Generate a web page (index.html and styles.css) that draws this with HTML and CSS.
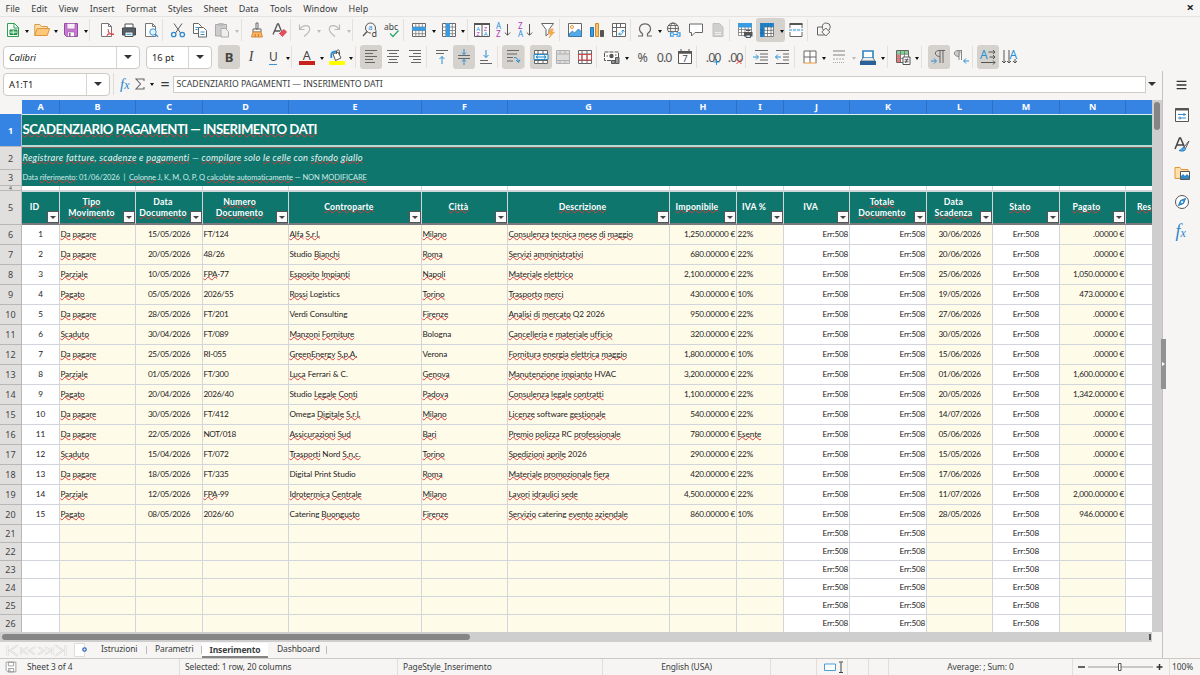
FILE: index.html
```html
<!DOCTYPE html>
<html lang="it">
<head>
<meta charset="utf-8">
<title>Scadenziario pagamenti</title>
<link rel="stylesheet" href="styles.css">
</head>
<body>
<div class="app">
<nav class="menu"><span>File</span><span>Edit</span><span>View</span><span>Insert</span><span>Format</span><span>Styles</span><span>Sheet</span><span>Data</span><span>Tools</span><span>Window</span><span>Help</span><b class="close">×</b></nav>

<div class="bar standard">
<span class="b dd"><svg viewBox="0 0 16 16"><path d="M2.500 1.500h7l4 4v9h-11z" fill="#f4fff7" stroke="#2f9e55"/><path d="M9 1.500v4.500h4.500" stroke="#2f9e55"/><path d="M5 8h7v4.500H5z" fill="#43b567" stroke="#248146"/><path d="M5 10.200h7M8.300 8v4.500" stroke="#fff" stroke-width=".7"/></svg><i></i></span>
<span class="b dd"><svg viewBox="0 0 16 16"><path d="M.8 13.500V2.500h5l1.500 2h6v2.500" fill="#ffe0ad" stroke="#d99a45"/><path d="M.8 13.500l2.400-7h12.300l-2.200 7z" fill="#ffc778" stroke="#dc963b"/></svg><i></i></span>
<span class="b dd"><svg viewBox="0 0 16 16"><path d="M1.500 1.500h13v13h-11l-2-2z" fill="#c77bd0" stroke="#974aa5"/><path d="M4 1.500h8v5.500H4z" fill="#f8effa" stroke="#974aa5" stroke-width=".6"/><path d="M4.500 10h7v4.500h-7z" fill="#fff" stroke="#974aa5" stroke-width=".6"/><path d="M6 11h1.500v3.500H6z" fill="#974aa5"/></svg><i></i></span>
<u class="w"></u>
<span class="b"><svg viewBox="0 0 16 16"><path d="M2.500 1.500h7l3 3v10h-10zM9.500 1.500v3h3" fill="#fff" stroke="#777"/><path d="M9 7c1 3 1 4-1.500 7.500M9 9c1 2.500 3 3.500 6 3.500M8 13c2-1 4-1.500 7-.8" stroke="#e0404c"/></svg></span>
<span class="b"><svg viewBox="0 0 16 16"><path d="M4 2h8v4H4z" fill="#fff" stroke="#4c5357"/><path d="M1.500 6h13v7h-13z" fill="#586067" stroke="#41484d"/><path d="M4 10h8v4.500H4z" fill="#eef8ff" stroke="#4c5357"/><path d="M5.500 12.300h5" stroke="#4398d6"/></svg></span>
<span class="b"><svg viewBox="0 0 16 16"><path d="M2.500 1.500h7l3 3v10h-10zM9.500 1.500v3h3" fill="#fff" stroke="#777"/><circle cx="10" cy="10" r="3.200" fill="#e4f4ff" stroke="#3a93d2"/><path d="M12.300 12.300l2.700 2.500" stroke="#3a93d2" stroke-width="1.500"/></svg></span>
<u></u>
<span class="b"><svg viewBox="0 0 16 16"><path d="M4 1.500l6.500 9.500M12 1.500L5.500 11" stroke="#595d60"/><circle cx="3.700" cy="12.500" r="2.200" stroke="#328bd0" stroke-width="1.300"/><circle cx="12.300" cy="12.500" r="2.200" stroke="#328bd0" stroke-width="1.300"/></svg></span>
<span class="b"><svg viewBox="0 0 16 16"><path d="M1.500 1.500h5l3 3v7h-8z" fill="#fff" stroke="#666"/><path d="M6.500 5.500h5l3 3v6.500h-8z" fill="#fff" stroke="#666"/><path d="M3.500 5.500h3M3.500 7.500h2M8.500 10h4M8.500 12.500h4" stroke="#3990cf"/></svg></span>
<span class="b dd off"><svg viewBox="0 0 16 16"><path d="M1.500 2.500h11v11.500h-11z" fill="#ccc" stroke="#aaa"/><path d="M4.500 1h5v3h-5z" fill="#bbb"/><path d="M7 6.500h4.500l3 3v5.500H7z" fill="#eee" stroke="#aaa"/></svg><i></i></span>
<u></u>
<span class="b"><svg viewBox="0 0 16 16"><path d="M7 1h2v6H7zM4 7h8v3H4z" fill="#fff" stroke="#666"/><path d="M4 10h8l1.500 5H2.500z" fill="#f9b565" stroke="#d88c35"/><path d="M6 15l.5-3M9.500 15v-3" stroke="#b36b21" stroke-width=".7"/></svg></span>
<span class="b"><svg viewBox="0 0 16 16"><path d="M2 12.500L6.500 2h1l3.200 8M3.500 9H9" stroke="#555" stroke-width="1.300"/><path d="M8 12l5-4.500 2.500 2.500-4.700 5z" fill="#e94d5c" stroke="#d54c57"/><path d="M8 12l3 3" stroke="#fff"/></svg></span>
<u class="n"></u>
<span class="b dd off"><svg viewBox="0 0 16 16"><path d="M2.500 2.500v5h5M2.800 7.200C6.500 2 12.500 3 12.700 7c.1 3-3 5.500-5.700 7.500" stroke="#b9babb" stroke-width="1.200"/></svg><i></i></span>
<span class="b dd off"><svg viewBox="0 0 16 16"><path d="M13.500 2.500v5h-5M13.200 7.200C9.500 2 3.500 3 3.300 7c-.1 3 3 5.500 5.700 7.500" stroke="#b9babb" stroke-width="1.200"/></svg><i></i></span>
<u class="w"></u>
<span class="b"><svg viewBox="0 0 16 16"><circle cx="8.500" cy="6" r="5" stroke="#555"/><path d="M5 9.500l-4 4.500" stroke="#555" stroke-width="1.300"/><text x="6.200" y="8" font-size="7.500" fill="#168ee0">a</text><path d="M9 8h5v7H9z" fill="#f6f5f4"/><text x="9.500" y="15" font-size="9" fill="#444">d</text></svg></span>
<span class="b"><svg viewBox="0 0 16 16"><text x="0" y="7.500" font-size="8.500" fill="#444">abc</text><path d="M6 11.500l3 3 5.500-6" stroke="#30a968" stroke-width="1.300"/></svg></span>
<u></u>
<span class="b dd"><svg viewBox="0 0 16 16"><path d="M1.500 1.500h13v13h-13z" fill="#fff" stroke="#666"/><path d="M4.800 1v14M8 1v14M11.300 1v14M1 5h14M1 8.500h14M1 11.700h14" stroke="#777" stroke-width=".8"/><path d="M1 5h14v3.500H1z" fill="#399be0"/></svg><i></i></span>
<span class="b dd"><svg viewBox="0 0 16 16"><path d="M1.500 1.500h13v13h-13z" fill="#fff" stroke="#666"/><path d="M4.800 1v14M8 1v14M11.300 1v14M1 5h14M1 8.500h14M1 11.700h14" stroke="#777" stroke-width=".8"/><path d="M5 1h4v14H5z" fill="#399be0"/></svg><i></i></span>
<u class="n"></u>
<span class="b"><svg viewBox="0 0 16 16"><path d="M.5 1.500h15v13H.5zM8 2v13" fill="#fff" stroke="#555"/><path d="M0 2h16" stroke="#555" stroke-width="2"/><text x="2.200" y="8.500" font-size="6" fill="#168ee0">A</text><text x="2.200" y="13.800" font-size="6" fill="#ae39b8">Z</text><text x="9.800" y="8.500" font-size="6" fill="#ae39b8">Z</text><text x="9.800" y="13.800" font-size="6" fill="#168ee0">A</text></svg></span>
<span class="b"><svg viewBox="0 0 16 16"><text x="0" y="7" font-size="8" fill="#168ee0">A</text><text x="0" y="15" font-size="8" fill="#ae39b8">Z</text><path d="M11.500 2v11M8.800 10.500l2.700 2.700 2.700-2.700" stroke="#555"/></svg></span>
<span class="b"><svg viewBox="0 0 16 16"><text x="0" y="7" font-size="8" fill="#ae39b8">Z</text><text x="0" y="15" font-size="8" fill="#168ee0">A</text><path d="M11.500 2v11M8.800 10.500l2.700 2.700 2.700-2.700" stroke="#555"/></svg></span>
<span class="b"><svg viewBox="0 0 16 16"><path d="M1.500 1.500h12L9 7.500V11l-3 3V7.500z" fill="#fff" stroke="#666"/><path d="M11 7l-3 5h3l-2 4 5.500-6h-3l2-3z" fill="#f7ad50" stroke="#e89129" stroke-width=".5"/></svg></span>
<u></u>
<span class="b"><svg viewBox="0 0 16 16"><path d="M1.500 1.500h13v13h-13z" fill="#fff" stroke="#666"/><circle cx="5" cy="5" r="1.500" stroke="#e79835"/><path d="M2 12l3.500-3 2 2 4-4 3 3v4.500H2z" fill="#55a9e4" stroke="#2576b4" stroke-width=".7"/></svg></span>
<span class="b"><svg viewBox="0 0 16 16"><path d="M1.500 5.500h3v9h-3z" fill="#3d9be1" stroke="#2277b5"/><path d="M6.500 1.500h3v13h-3z" fill="#f7c273" stroke="#d48b2b"/><path d="M11.500 8.500h3v6h-3z" fill="#555" stroke="#555"/></svg></span>
<span class="b"><svg viewBox="0 0 16 16"><path d="M1.500 1.500h13v13h-13zM1.500 5.500h13M5.500 1.500v13M9.500 2v3M2 9.500h3" fill="#fff" stroke="#666"/><path d="M8 12c3 1 4-1 4-4M10.500 9.500L12 8l1.500 1.500M9 10.500L7.500 12 9 13.500" stroke="#278dd2"/></svg></span>
<u class="n"></u>
<span class="b dd"><svg viewBox="0 0 16 16"><path d="M1 14h4.500v-2.300C.2 8.200 2.500 1.800 8 1.800s7.800 6.400 2.500 9.900V14H15" stroke="#666" stroke-width="1.200"/></svg><i></i></span>
<span class="b"><svg viewBox="0 0 16 16"><circle cx="7" cy="6.500" r="5.500" stroke="#555"/><ellipse cx="7" cy="6.500" rx="2.500" ry="5.500" stroke="#555" stroke-width=".8"/><path d="M1.500 6.500h11M2.500 3.500h9M2.500 9.500h9" stroke="#555" stroke-width=".8"/><path d="M3 10h12.500v5H3z" fill="#f6f5f4"/><path d="M8 10.800H4.500v3.400H8M10.500 10.800H14v3.400h-3.500M7 12.500h5" stroke="#369ae0" stroke-width="1.200"/></svg></span>
<span class="b"><svg viewBox="0 0 16 16"><path d="M1.500 2h13v8.500H7L3.500 14v-3.500h-2z" fill="#fff" stroke="#666"/></svg></span>
<span class="b"><svg viewBox="0 0 16 16"><path d="M3 1.500h6.500l3.500 3.500v9.500H3z" fill="#d0d0d0" stroke="#c1c1c1"/><path d="M5 10.500h6M5 12.500h6" stroke="#eee"/></svg></span>
<u></u>
<span class="b"><svg viewBox="0 0 16 16"><path d="M1.500 1.500h13v12h-13zM1.500 7.500h13M1.500 10.500h13M4.500 1.500v12M8 1.500v12M11.300 1.500v12" fill="#fff" stroke="#777" stroke-width=".8"/><path d="M1 1h14v4.500H1z" fill="#399be0"/><path d="M7 10h8.500v4.500H7z" fill="#555"/><path d="M9 8.500h4.500M9 13h4.500v2.500H9z" fill="#def" stroke="#555"/></svg></span>
<span class="b dd on"><svg viewBox="0 0 16 16"><path d="M1.500 1.500h13v13h-13zM1.500 5h13M1.500 8.300h13M1.500 11.500h13M5 1.500v13M8.500 1.500v13M12 1.500v13" fill="#fff" stroke="#666" stroke-width=".8"/><path d="M1 1h14v4H5.500v10H1z" fill="#2588ce"/><path d="M3 1v14M6 1v4M9 1v4M12 1v4M1 8h4M1 11h4" stroke="#195e92" stroke-width=".7"/></svg><i></i></span>
<span class="b"><svg viewBox="0 0 16 16"><path d="M2 6V2h12v4M2 10v4.500h12V10" fill="#fff" stroke="#666"/><path d="M1.500 2h13" stroke="#555" stroke-width="2"/><path d="M1 8h14" stroke="#299ae0" stroke-dasharray="3 1"/></svg></span>
<u class="m"></u>
<span class="b"><svg viewBox="0 0 16 16"><path d="M1.500 5h7v8h-7z" stroke="#666"/><circle cx="10.300" cy="5" r="4" fill="#f6f5f4" stroke="#666"/><path d="M9.800 6l4 4-4 4-4-4z" fill="#f6f5f4" stroke="#666"/></svg></span>
</div>

<div class="bar format">
<div class="combo font"><em>Calibri</em><span><i></i></span></div>
<div class="combo size"><span class="v">16 pt</span><span><i></i></span></div>
<span class="b on"><b class="gl">B</b></span><span class="b"><em class="gl it">I</em></span><span class="b dd"><span class="gl un">U</span><i></i></span>
<u></u>
<span class="b dd"><svg viewBox="0 0 16 16"><text x="3.700" y="10.500" font-size="12.500" fill="#444">A</text><path d="M0 12h16v4H0z" fill="#c9211e"/></svg><i></i></span>
<span class="b dd"><svg viewBox="0 0 16 16"><path d="M4 5l5-2 3 6-5.500 2.500z" fill="#fff" stroke="#555"/><path d="M7.500 5V2c1-1.800 3-1.300 3 .5V6" stroke="#555"/><path d="M2.300 9V5.500C2.500 3 4.500 2.500 7 2.500" stroke="#278ed5" stroke-width="1.800"/><path d="M0 12h16v4H0z" fill="#ffff00"/></svg><i></i></span>
<u></u>
<span class="b on"><svg viewBox="0 0 16 16"><path d="M2 1.500h12M2 4.500h8M2 7.500h12M2 10.500h8M2 13.500h10" stroke="#666"/></svg></span>
<span class="b"><svg viewBox="0 0 16 16"><path d="M2 1.500h12M4 4.500h8M2 7.500h12M4 10.500h8M3 13.500h10" stroke="#666"/></svg></span>
<span class="b"><svg viewBox="0 0 16 16"><path d="M2 1.500h12M6 4.500h8M2 7.500h12M6 10.500h8M4 13.500h10" stroke="#666"/></svg></span>
<u></u>
<span class="b"><svg viewBox="0 0 16 16"><path d="M2 1.500h12M2 4.500h8" stroke="#666"/><path d="M8 15V7.500M5.500 10L8 7.500l2.500 2.500" stroke="#278fd4"/></svg></span>
<span class="b on"><svg viewBox="0 0 16 16"><path d="M2 6.500h12M2 9.500h12" stroke="#666"/><path d="M8 0v5.500M6 3.500l2 2 2-2M8 16v-5.500M6 12.500l2-2 2 2" stroke="#278fd4"/></svg></span>
<span class="b"><svg viewBox="0 0 16 16"><path d="M2 11.500h8M2 14.500h12" stroke="#666"/><path d="M8 1v7.500M5.500 6L8 8.500 10.500 6" stroke="#278fd4"/></svg></span>
<u></u>
<span class="b on"><svg viewBox="0 0 16 16"><path d="M2 1.500h12M2 5h10M2 8.500h6M2 12h6" stroke="#666"/><path d="M9 8.500c3 0 3.500 1 4.500 4.500M11 11l2.500 2.500L15 10.500" stroke="#278fd4"/></svg></span>
<u class="m"></u>
<span class="b on"><svg viewBox="0 0 16 16"><path d="M1.500 1.500h13v13h-13zM1 5h14M1 11.500h14M5 1v14M10 1v14" fill="#fff" stroke="#666"/><path d="M1 5.500h14v5H1z" fill="#eaf7ff" stroke="#2688ca"/><path d="M3 8h10M5 6.500L3 8l2 1.500M11 6.500L13 8l-2 1.500" stroke="#2688ca"/></svg></span>
<span class="b"><svg viewBox="0 0 16 16"><path d="M1.500 1.500h13v13h-13zM1 5h14M1 11.500h14M5 1v4M10 1v4M5 12v3M10 12v3" fill="#ddd" stroke="#b0b0b0"/></svg></span>
<span class="b"><svg viewBox="0 0 16 16"><path d="M1.500 1.500h13v13h-13zM1 5h14M1 11.500h14M5 1v14M10 1v14" fill="#fff" stroke="#666"/><path d="M1.500 5.500h13v5.500h-13zM5 5.500v5.500M10 5.500v5.500" stroke="#d9484e"/></svg></span>
<u></u>
<span class="b dd"><svg viewBox="0 0 16 16"><path d="M.5 3h14v8.500H.5z" fill="#fff" stroke="#555" stroke-dasharray="4 1"/><circle cx="7.500" cy="7" r="2.200" fill="#555"/><path d="M2.500 7h1.500M11 6h1.500" stroke="#555"/><path d="M7.500 11.500h3.500v3H7.500zM11.500 8.500h3.500v6h-3.500z" fill="#999" stroke="#555"/></svg><i></i></span>
<span class="b"><span class="num">%</span></span><span class="b"><span class="num">0.0</span></span>
<span class="b"><svg viewBox="0 0 16 16"><path d="M1.500 2.500h13v12h-13z" fill="#fff" stroke="#555"/><path d="M1 3.500h14" stroke="#555" stroke-width="2.500"/><path d="M4 0v3M12 0v3" stroke="#555"/><text x="5.500" y="13.300" font-size="9" fill="#444">7</text></svg></span>
<u></u>
<span class="b"><span class="num">.00</span><svg class="over" viewBox="0 0 16 16"><path d="M12.500 10v6M9.500 13h6" stroke="#278fd4"/></svg></span>
<span class="b"><span class="num">.00</span><svg class="over" viewBox="0 0 16 16"><path d="M10.500 10l5 5M15.500 10l-5 5" stroke="#e3403f"/></svg></span>
<u></u>
<span class="b"><svg viewBox="0 0 16 16"><path d="M2 1.500h13M7 5h8M7 8h8M7 11h8M2 14.500h13" stroke="#666"/><path d="M0 8h5M3 5.500L5.500 8 3 10.500" stroke="#278fd4"/></svg></span>
<span class="b"><svg viewBox="0 0 16 16"><path d="M1 1.500h13M8 5h6M8 8h6M8 11h6M1 14.500h13" stroke="#666"/><path d="M.5 8H6M3 5.500L.5 8 3 10.500" stroke="#278fd4"/></svg></span>
<u class="n"></u>
<span class="b dd"><svg viewBox="0 0 16 16"><path d="M2 14V2h12v12M8 2v12M2 8h12" fill="#fff" stroke="#666"/><path d="M1.500 14h13" stroke="#ed963a"/></svg><i></i></span>
<span class="b dd off"><svg viewBox="0 0 16 16"><path d="M2 2h12M2 6h12" stroke="#bbb" stroke-width="2"/><path d="M2 10h12" stroke="#aaa" stroke-dasharray="2 1"/><path d="M2 13.500h12" stroke="#aaa" stroke-dasharray="1 1"/></svg><i></i></span>
<span class="b dd"><svg viewBox="0 0 16 16"><path d="M3 2h10v7H3z" fill="#fff" stroke="#3183bd" stroke-width="1.600"/><path d="M3 9l-2 3h14l-2-3" fill="#eee" stroke="#678"/><path d="M0 12h16v4H0z" fill="#2a6099"/></svg><i></i></span>
<u></u>
<span class="b dd"><svg viewBox="0 0 16 16"><path d="M1.500 1.500h12v12h-12z" fill="#fff" stroke="#666"/><path d="M2 2h11v3H2z" fill="#84d398"/><path d="M2 6h4v3H2zM2 10h4v3H2z" fill="#ed7674"/><path d="M5.500 1v13M9.500 1v13M1 5.300h13M1 9.500h13" stroke="#666" stroke-width=".7"/><path d="M8 8h7v7.500H8zM9.500 10.800h4M9.500 12.800h4M12.500 9.500l-2 4.500" fill="#fff" stroke="#555"/></svg><i></i></span>
<u class="w"></u>
<span class="b on"><svg viewBox="0 0 16 16"><path d="M14 1.500H8c-5 0-5 6 1 6M9 1.500V14M12 1.500V14" fill="none" stroke="#666"/><path d="M0 12h5M3 9.500l2.500 2.500L3 14.500" stroke="#278fd4"/></svg></span>
<span class="b"><svg viewBox="0 0 16 16"><path d="M9 1.500H5c-5 0-5 6 1 6M6 1.500V11M8.500 1.500V11" fill="#ccc" stroke="#888"/><path d="M16 12h-5M13 9.500L10.500 12l2.500 2.500" stroke="#278fd4"/></svg></span>
<u></u>
<span class="b on"><svg viewBox="0 0 16 16"><text x="0" y="9.500" font-size="12" fill="#278fd4">A</text><path d="M8.500 3H15M13 1l2 2-2 2M9.500 8H15M13 6l2 2-2 2M1 13.500h14M13 11.500l2 2-2 2" stroke="#555"/></svg></span>
<span class="b"><svg viewBox="0 0 16 16"><text x="7.500" y="9.500" font-size="12" fill="#278fd4">A</text><path d="M2 1v13M0 12l2 2 2-2M7 1v13M5 12l2 2 2-2M13 10v4M11 12l2 2 2-2" stroke="#555"/></svg></span>
</div>

<div class="body">
<main>
<div class="formula">
<div class="combo name"><span class="v">A1:T1</span><span><i></i></span></div>
<u></u><em class="fx">f<small>x</small></em><svg class="sigma" viewBox="0 0 10 12"><path d="M9 3V1H1l4.500 5L1 11h8V9" stroke="#666" stroke-width="1.100"/></svg><i class="car"></i><b class="eq">=</b>
<div class="input">SCADENZIARIO PAGAMENTI — INSERIMENTO DATI</div><i class="car big"></i>
</div>
<div class="sheetwrap">
<div class="sheet" id="sheet"></div>
<div class="vscroll"><div></div></div>
</div>
<div class="hscroll"><div></div><i></i></div>
<div class="tabs">
<svg class="navs" viewBox="0 0 61 13"><path d="M1.500 1v11M12 1L4 6.500l8 5.500M15 3v8M22 3l-6 3.500 6 4M29 3l-6 3.500 6 4M32 3l6 3.500-6 4M39 3l6 3.500-6 4M46.500 3v8M49 1l8 5.500-8 5.500M59.500 1v11" stroke="#d8d7d6" stroke-width="2"/><path d="M1.500 1v11M12 1L4 6.500l8 5.500M15 3v8M22 3l-6 3.500 6 4M29 3l-6 3.500 6 4M32 3l6 3.500-6 4M39 3l6 3.500-6 4M46.500 3v8M49 1l8 5.500-8 5.500M59.500 1v11" stroke="#f8f8f7" stroke-width=".8"/></svg>
<svg class="add" viewBox="0 0 14 14"><path d="M.5.500h10v13H.5z" fill="#fff" stroke="#ddd"/><circle cx="10.500" cy="6.500" r="1.700" fill="#fff" stroke="#2f66b5" stroke-width="1.300"/></svg>
<span class="t1">Istruzioni</span><span class="t2">Parametri</span><b class="t3">Inserimento</b><span class="t4">Dashboard</span>
</div>
</main>
<aside>
<svg viewBox="0 0 16 16"><path d="M2 3.500h12M2 8h12M2 12.500h12" stroke="#333" stroke-width="1.700"/></svg>
<svg viewBox="0 0 16 16"><path d="M1.500 1.500h13v13h-13z" fill="#fff" stroke="#555"/><path d="M1 2.500h14" stroke="#555" stroke-width="2"/><path d="M4 7.500h8M10 6v3M4 11h8M6 9.500v3" stroke="#2f8ccc"/></svg>
<svg viewBox="0 0 16 16"><path d="M1 13L5.500 2h1l4 9M3 9h6" stroke="#444" stroke-width="1.500"/><path d="M15 5l-5 6 1.500 1.500z" fill="#fff" stroke="#555"/><path d="M10 11c-2 0-2 3-5 3.500 4 1.500 7 0 6.500-2" fill="#48a4e5" stroke="#2584c5"/></svg>
<svg viewBox="0 0 16 16"><path d="M1 13.500v-11h5l1.500 2H14v9z" fill="#ffe0ac" stroke="#e39639"/><path d="M6.500 6.500h9v8h-9z" fill="#fff" stroke="#555"/><path d="M7 14v-3l2-2 2 2 2-2 2 2v3z" fill="#3188c8"/></svg>
<svg viewBox="0 0 16 16"><circle cx="8" cy="8" r="6.500" fill="#fff" stroke="#555"/><path d="M11.500 4.500L9.500 9.500l-5 2 2-5z" fill="#3b9ce0" stroke="#2679b5"/><circle cx="8" cy="8" r="1" fill="#fff"/></svg>
<em class="fx">f<small>x</small></em>
<div class="grip"><i></i></div>
</aside>
</div>
<footer>
<div class="s0"><svg viewBox="0 0 16 16"><path d="M1.500 1.500h13v13h-11l-2-2zM4.500 1.500h7v5h-7zM4.500 10h7v4.500h-7zM6.500 11v3" fill="#fff" stroke="#888"/></svg></div>
<div class="s1">Sheet 3 of 4</div><div class="s2">Selected: 1 row, 20 columns</div><div class="s3">PageStyle_Inserimento</div><div class="s4">English (USA)</div><div class="s5"></div>
<div class="s6"><svg viewBox="0 0 20 12"><path d="M.5 3h11v6.500H.5z" fill="#fff" stroke="#4b9fd6"/><path d="M17 1.500v9.500M15 1h4M15 11.500h4" stroke="#444"/></svg></div>
<div class="s7"></div><div class="s8"></div><div class="s9">Average: ; Sum: 0</div>
<div class="s10"><svg viewBox="0 0 86 12"><path d="M0 6h7M78.500 6h6M81.500 3v6" stroke="#333" stroke-width="1.500"/><path d="M10 6h65" stroke="#999"/><path d="M40.500 2.500h2.500v7h-2.500z" fill="#fff" stroke="#555"/></svg></div>
<div class="s11">100%</div>
</footer>
</div>
<script src="sheet.js"></script>
</body>
</html>
```

FILE: styles.css
```css
* { box-sizing: border-box; }
body { margin: 0; background: #f6f5f4; overflow: hidden; }
svg { fill: none; overflow: visible; }
svg text { font-family: "Noto Sans", sans-serif; stroke: none; }
.app { width: 1200px; height: 675px; display: flex; flex-direction: column; font: 9px "Noto Sans", sans-serif; color: #3a3d3e; }

.menu { height: 17px; flex: none; display: flex; gap: 11.300px; padding: 0 6px 0 5.500px; line-height: 17px; border-bottom: 1px solid #e6e4e2; }
.menu .close { margin-left: auto; font-size: 13px; line-height: 15px; color: #222; }

.bar { display: flex; align-items: center; flex: none; padding-left: 1.500px; }
.standard { height: 27px; padding-bottom: 1px; }
.format { height: 27px; padding: 0 0 1px 3px; }
.b { width: 22px; height: 24px; flex: none; display: flex; align-items: center; padding-left: 3px; position: relative; border-radius: 3px; }
.b svg { width: 16px; height: 16px; flex: none; }
.b.dd { width: 29.300px; }
.b.on { background: #d5d1cd; }
.b i, .car { width: 0; height: 0; border: 2.300px solid transparent; border-top: 3px solid #111; border-bottom: 0; }
.b i { margin-left: 4.700px; margin-top: 2px; flex: none; }
.b.off i { border-top-color: #bbb; }
.b svg.over { position: absolute; left: 3px; }
.bar u { width: 5px; height: 22px; flex: none; border-left: 1px solid #e3e1de; margin: 0; }
.bar u.w { width: 7px; }
.bar u.m { width: 6px; }
.bar u.n { width: 4.500px; }
.standard u.n { width: 4px; }
.gl { width: 16px; text-align: center; font-size: 13px; line-height: 16px; color: #444; }
.gl.it { font-family: "Liberation Serif", serif; font-size: 14px; }
.gl.un { border-bottom: 1px solid #3a93d2; width: 8px; margin: 0 4px; line-height: 14px; font-size: 12px; }
.num { width: 18px; text-align: center; white-space: nowrap; font-size: 12.500px; letter-spacing: -1px; color: #555; }

.combo { display: flex; background: #fff; border: 1px solid #cdc9c5; border-radius: 4px; height: 23px; align-items: center; font-size: 9.300px; color: #222; flex: none; }
.combo > :first-child { flex: 1; padding-left: 5px; }
.combo > :last-child { width: 23px; height: 21px; border-left: 1px solid #d8d4d0; display: grid; place-items: center; }
.combo i, .car.big { width: 0; height: 0; border: 4px solid transparent; border-top: 4px solid #333; border-bottom: 0; }
.font { width: 137px; margin-right: 6px; }
.size { width: 66px; margin-right: 6px; }
.name { width: 107px; }

.body { flex: 1; display: flex; min-height: 0; }
main { width: 1162px; display: flex; flex-direction: column; }
.formula { height: 29px; display: flex; align-items: center; padding: 0 0 3px 3px; flex: none; }
.formula u { width: 9px; height: 22px; border-left: 1px solid #dedbd8; margin-left: 3px; }
.fx { font: italic 15px "Liberation Serif", serif; color: #2c86c8; width: 15px; line-height: 16px; margin-left: -2px; }
.fx small { font-size: 12px; }
.sigma { width: 10px; height: 12px; margin: 0 5px 0 0; }
.formula .eq { font-size: 16px; line-height: 16px; font-weight: 500; margin-left: 4px; width: 14px; text-align: center; }
.input { flex: 1; height: 17px; background: #fff; border: 1px solid #cfcbc7; line-height: 14px; padding-left: 2.500px; font-size: 8.700px; margin-left: 1px; }
.car.big { margin: 0 6px 0 2px; }

.sheetwrap { display: flex; height: 532px; flex: none; }
.sheet { width: 1152px; background: #fff; overflow: hidden; }
.row { display: grid; grid-template-columns: 22px 38px 76px 67px 86px 133px 86px 162px 67px 47px 66px 77px 66px 67px 66px 26px; height: 20px; font: 8.200px "Lato", sans-serif; color: #222; overflow: hidden; }
.row.small { height: 18px; }
.row > div { border-right: 1px solid #d3d5dc; border-bottom: 1px solid #d3d5dc; display: flex; align-items: center; white-space: pre; overflow: hidden; padding: 0 0 1px .4px; min-width: 0; letter-spacing: -.07px; }
.row > div:last-child { border-right: 0; }
.row .y { background: #fffbe9; }
.row .c { justify-content: center; padding-left: 0; }
.row .r { justify-content: flex-end; padding-right: .8px; letter-spacing: -.16px; }
.row .tight { letter-spacing: -.32px; }
.row .rh { background: #e1dfde; border-color: #bab8b7; justify-content: center; font: 9px "Noto Sans", sans-serif; padding: 0; color: #444; letter-spacing: 0; }
.w { text-decoration: underline wavy #d93a37; text-decoration-thickness: .6px; text-underline-offset: -1px; text-decoration-skip-ink: none; }
.row.cols { height: 14px; font: bold 9px "Noto Sans", sans-serif; color: #fff; }
.row.cols > div { background: #3584e4; justify-content: center; border-color: #2d70c2; border-bottom: 0; padding: 0 0 1px; }
.row.cols > .corner { background: #f6f5f4; border-right: 0; }
.band { display: grid; grid-template-columns: 22px 1fr; background: #0f766e; color: #fff; font-family: "Lato", sans-serif; }
.band .rh { background: #e1dfde; border-right: 1px solid #bab8b7; border-bottom: 1px solid #bab8b7; color: #444; font: 9px "Noto Sans", sans-serif; display: grid; place-items: center; overflow: hidden; }
.band p { margin: 0; padding: 0 0 2px .5px; display: flex; align-items: center; white-space: pre; }
.band.one { height: 33px; }
.band.one .rh { background: #3584e4; color: #fff; font-weight: bold; }
.band.one p { font-size: 13.200px; font-weight: bold; letter-spacing: -.55px; border-top: 1px solid #dff0ee; border-bottom: 2px solid #b9d9d5; padding-bottom: 2px; }
.band.two { height: 23px; }
.band.two p { font-size: 9.300px; letter-spacing: .27px; font-style: italic; color: #e5f5f2; border-top: 1px solid #80635e; padding-bottom: 4px; }
.band.three { height: 16px; }
.band.three p { font-size: 7.500px; letter-spacing: -.085px; color: #cdece7; }
.row.four { height: 5px; }
.row.four .rh { font-size: 5px; line-height: 4px; }
.row.head { height: 34px; font: bold 8.700px/10.400px "Lato", sans-serif; }
.row.head > .h { background: #0f766e; color: #fff; justify-content: center; text-align: center; padding: 0 12px 0 0; position: relative; border-top: 1px solid #cfd9da; border-bottom: 2px solid #78797c; letter-spacing: .2px; }
.row.head > .last { justify-content: flex-start; padding: 0 0 0 11px; }
.h button { position: absolute; right: 0; bottom: 0; width: 12px; height: 12px; padding: 0; border: 1px solid #555; background: #fafafa; display: grid; place-items: center; }
.h button i { border: 3px solid transparent; border-top: 3px solid #444; border-bottom: 0; }
.vscroll { width: 10px; background: #cecece; padding: 2px 2px 0; }
.vscroll div { height: 28px; width: 6px; border-radius: 3px; background: #858585; }
.hscroll { height: 10px; width: 1152px; background: #cecece; padding: 2px 1px 2px 2px; display: flex; justify-content: space-between; flex: none; }
.hscroll div { width: 468px; height: 6px; border-radius: 3px; background: #858585; }
.hscroll i { width: 2px; background: #555; }
.tabs { height: 16px; display: flex; align-items: center; font-size: 8.500px; letter-spacing: -.12px; line-height: 12px; flex: none; }
.navs { width: 61px; height: 13px; margin: 0 7px 0 6px; }
.add { width: 14px; height: 14px; margin-right: 13px; }
.tabs span { height: 14px; background: linear-gradient(#bbb, #bbb) right 8px center / 1px 8px no-repeat; }
.t1 { width: 54px; } .t2 { width: 47px; }
.t3 { width: 66px; text-align: center; background: #fff; border-bottom: 2px solid #858585; height: 15px; line-height: 13px; }
.t4 { margin-left: 9px; width: 50px; }
.tabs .t2, .tabs .t4 { background-position: right 0 center; }

aside { width: 38px; border-left: 1px solid #c5c2bf; display: flex; flex-direction: column; align-items: center; gap: 13px; padding-top: 6px; position: relative; }
aside svg { width: 16px; height: 16px; flex: none; }
aside svg:first-child { width: 13px; margin-bottom: 1px; }
aside .fx { font-size: 18px; margin: 0 0 0 3px; }
.grip { position: absolute; left: -2px; top: 268px; width: 5px; height: 50px; background: #929292; display: grid; place-items: center; }
.grip i { border: 2.500px solid transparent; border-left: 3px solid #fff; border-right: 0; }

footer { height: 17px; flex: none; display: grid; grid-template-columns: 22px 158px 218px 205px 168px 46px 31px 21px 20px 184px 97px 30px; border-top: 1px solid #cbc8c5; line-height: 15px; font-size: 8.400px; letter-spacing: -.08px; white-space: nowrap; }
footer > div { border-right: 1px solid #e1dfdc; padding: 0 0 1px 5px; display: flex; align-items: center; }
footer > div:first-child { border: 0; }
.s0 svg { width: 12px; height: 12px; }
footer .s4, footer .s9 { justify-content: center; padding-left: 0; }
.s6 svg { width: 20px; height: 12px; }
footer .s6 { padding-left: 7px; }
.s10 svg { width: 86px; height: 12px; }
footer .s11 { border: 0; padding-left: 2px; }
```

FILE: sheet.js
```js
const sheet = document.getElementById('sheet');
// Words wrapped in underscores get the spell-check underline.
const mark = t => t.replace(/_([^_]+)_/g, '<span class="w">$1</span>');
const cell = (t, c = '') => `<div class="${c}"><span>${mark(t)}</span></div>`;

const letters = 'ABCDEFGHIJKLMN'.split('');
let out = '<div class="row cols"><div class="corner"></div>' + letters.map(l => cell(l)).join('') + '<div></div></div>';
const band = (n, cls, t) => `<div class="band ${cls}"><div class="rh">${n}</div><p><span>${mark(t)}</span></p></div>`;
out += band(1, 'one', '_SCADENZIARIO_ _PAGAMENTI_ — _INSERIMENTO_ _DATI_');
out += band(2, 'two', '_Registrare_ _fatture_, _scadenze_ e _pagamenti_ — _compilare_ solo _le_ _celle_ con _sfondo_ _giallo_');
out += band(3, 'three', 'Data _riferimento_: 01/06/2026  |  _Colonne_ J, K, M, O, P, Q _calcolate_ _automaticamente_ — NON _MODIFICARE_');
out += '<div class="row four">' + cell('4', 'rh') + '<div></div>'.repeat(15) + '</div>';

const heads = ['ID', '_Tipo_\n_Movimento_', 'Data\n_Documento_', '_Numero_\n_Documento_', '_Controparte_', '_Città_', '_Descrizione_', '_Imponibile_', 'IVA %', 'IVA', '_Totale_\n_Documento_', 'Data\n_Scadenza_', '_Stato_', '_Pagato_'];
out += '<div class="row head">' + cell('5', 'rh') +
  heads.map(h => `<div class="h"><span>${mark(h)}</span><button><i></i></button></div>`).join('') +
  cell('_Res_', 'h last') + '</div>';

const data = `_Da_ _pagare_|15/05/2026|FT/124|_Alfa_ _S.r.l._|_Milano_|_Consulenza_ _tecnica_ _mese_ _di_ _maggio_|1,250.00000 €|22%|30/06/2026|.00000 €
_Da_ _pagare_|20/05/2026|48/26|Studio _Bianchi_|_Roma_|_Servizi_ _amministrativi_|680.00000 €|22%|20/06/2026|.00000 €
_Parziale_|10/05/2026|_FPA_-77|_Esposito_ _Impianti_|_Napoli_|_Materiale_ _elettrico_|2,100.00000 €|22%|25/06/2026|1,050.00000 €
_Pagato_|05/05/2026|2026/55|_Rossi_ Logistics|_Torino_|_Trasporto_ _merci_|430.00000 €|10%|19/05/2026|473.00000 €
_Da_ _pagare_|28/05/2026|FT/201|Verdi Consulting|_Firenze_|_Analisi_ _di_ _mercato_ Q2 2026|950.00000 €|22%|27/06/2026|.00000 €
_Scaduto_|30/04/2026|FT/089|_Manzoni_ _Forniture_|Bologna|_Cancelleria_ e _materiale_ _ufficio_|320.00000 €|22%|30/05/2026|.00000 €
_Da_ _pagare_|25/05/2026|RI-055|_GreenEnergy_ _S.p.A._|Verona|_Fornitura_ _energia_ _elettrica_ _maggio_|1,800.00000 €|10%|15/06/2026|.00000 €
_Parziale_|01/05/2026|FT/300|_Luca_ Ferrari & C.|_Genova_|_Manutenzione_ _impianto_ HVAC|3,200.00000 €|22%|01/06/2026|1,600.00000 €
_Pagato_|20/04/2026|2026/40|Studio _Legale_ _Conti_|_Padova_|_Consulenza_ _legale_ _contratti_|1,100.00000 €|22%|20/05/2026|1,342.00000 €
_Da_ _pagare_|30/05/2026|FT/412|Omega _Digitale_ _S.r.l._|_Milano_|_Licenze_ software _gestionale_|540.00000 €|22%|14/07/2026|.00000 €
_Da_ _pagare_|22/05/2026|NOT/018|_Assicurazioni_ _Sud_|_Bari_|_Premio_ _polizza_ RC _professionale_|780.00000 €|_Esente_|05/06/2026|.00000 €
_Scaduto_|15/04/2026|FT/072|_Trasporti_ Nord _S.n.c._|_Torino_|_Spedizioni_ _aprile_ 2026|290.00000 €|22%|15/05/2026|.00000 €
_Da_ _pagare_|18/05/2026|FT/335|Digital Print Studio|_Roma_|_Materiale_ _promozionale_ _fiera_|420.00000 €|22%|17/06/2026|.00000 €
_Parziale_|12/05/2026|_FPA_-99|_Idrotermica_ _Centrale_|_Milano_|_Lavori_ _idraulici_ _sede_|4,500.00000 €|22%|11/07/2026|2,000.00000 €
_Pagato_|08/05/2026|2026/60|Catering _Buongusto_|_Firenze_|_Servizio_ catering _evento_ _aziendale_|860.00000 €|10%|28/05/2026|946.00000 €`.split('\n').map(l => l.split('|'));

for (let n = 6; n <= 26; n++) {
  const d = data[n - 6] || Array(10).fill('');
  const full = n <= 20;
  out += `<div class="row${full ? '' : ' small'}">` + cell(String(n), 'rh') + cell(full ? String(n - 5) : '', 'c') +
    cell(d[0], 'y') + cell(d[1], 'y c tight') + cell(d[2], 'y tight') + cell(d[3], 'y') + cell(d[4], 'y') + cell(d[5], 'y') +
    cell(d[6], 'y r') + cell(d[7], 'y') + cell('Err:508', 'r') + cell('Err:508', 'r') + cell(d[8], 'y c tight') +
    cell('Err:508', 'c') + cell(d[9], 'y r') + '<div></div></div>';
}
sheet.innerHTML = out;
```
